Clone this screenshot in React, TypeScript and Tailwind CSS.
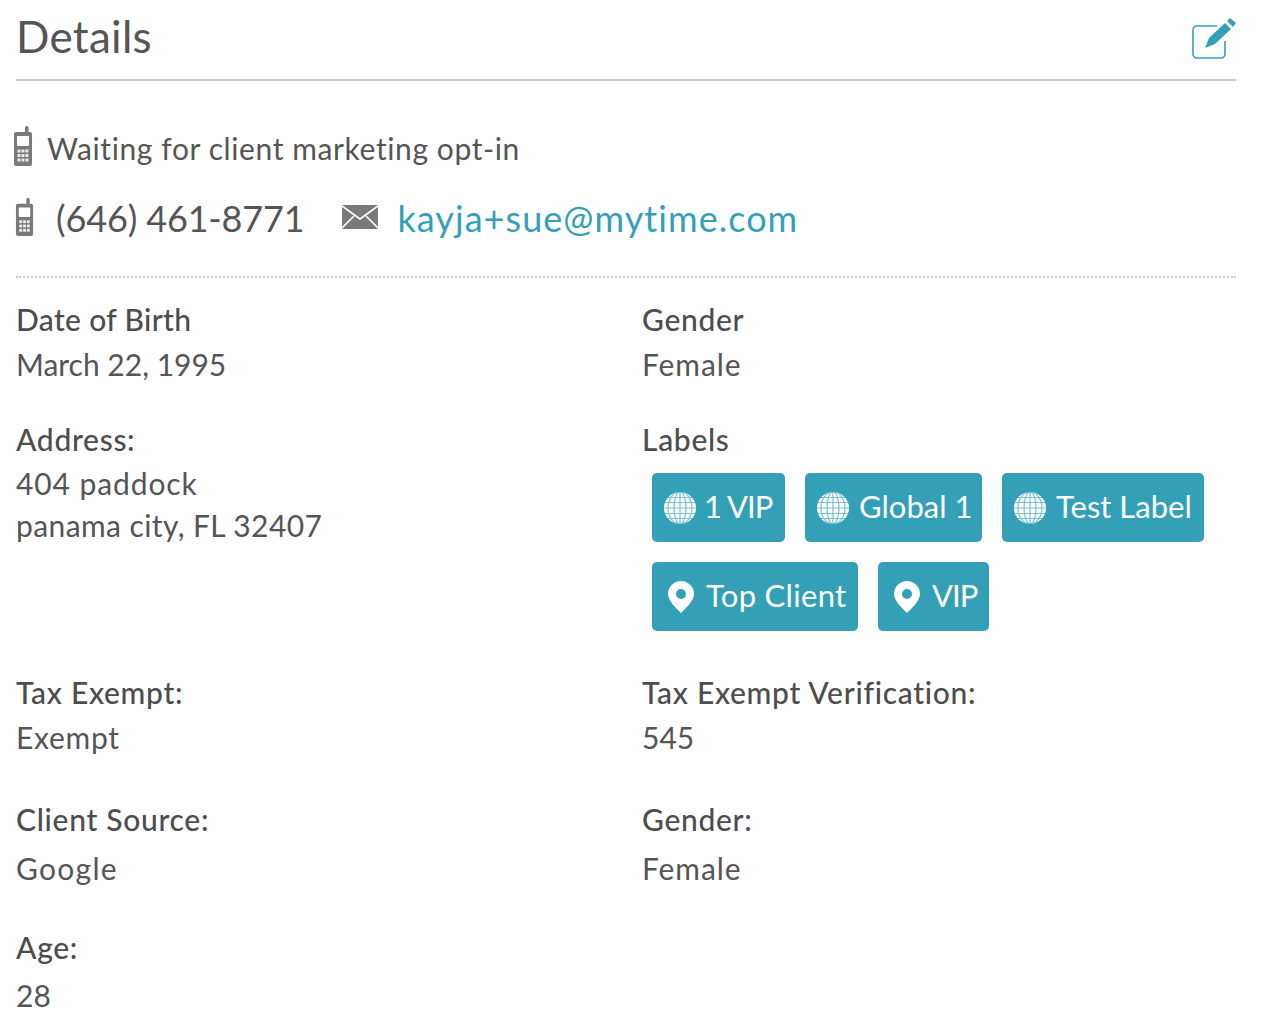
import React from "react";

const PhoneIcon = ({ className }: { className?: string }) => (
  <svg viewBox="0 0 20 40" className={className} fill="#7a7a7a">
    <rect x="12" y="0" width="3.5" height="8" rx="1.5" />
    <path d="M3 6h14a2 2 0 0 1 2 2v30a2 2 0 0 1-2 2H3a2 2 0 0 1-2-2V8a2 2 0 0 1 2-2z" />
    <rect x="4" y="10" width="12" height="10" rx="1" fill="#fff" />
    {[23.5, 28, 32.5].map((y) =>
      [4.5, 8.5, 12.5].map((x) => <rect key={`${x}-${y}`} x={x} y={y} width="3" height="3" fill="#fff" opacity="0.85" />)
    )}
  </svg>
);

const MailIcon = () => (
  <svg viewBox="0 0 36 24" className="h-[24px] w-[36px] shrink-0">
    <rect width="36" height="24" fill="#7a7a7a" />
    <path d="M0 1l18 13L36 1M0 23l12-12M36 23L24 11" fill="none" stroke="#fff" strokeWidth="1.6" />
  </svg>
);

const EditIcon = () => (
  <svg viewBox="0 0 46 42" className="h-[42px] w-[46px]">
    <path d="M27 9H7a4 4 0 0 0-4 4v24a4 4 0 0 0 4 4h24a4 4 0 0 0 4-4V24" fill="none" stroke="#33a0b8" strokeWidth="1.6" />
    <path d="M15 31l4-10L35 6l6 6-16 15z" fill="#33a0b8" />
    <path d="M37 4l3-3 6 5-3 4z" fill="#33a0b8" />
  </svg>
);

const GlobeIcon = () => (
  <svg viewBox="0 0 34 32" className="h-[32px] w-[34px] shrink-0">
    <circle cx="17" cy="16" r="16" fill="#fff" />
    <g stroke="#33a0b8" strokeWidth="1.2" fill="none" opacity="0.65">
      <ellipse cx="17" cy="16" rx="6" ry="16" />
      <ellipse cx="17" cy="16" rx="12" ry="16" />
      <path d="M17 0v32M2 5.500h30M1 10.500h32M1 16h32M1 21.500h32M2 26.500h30" />
    </g>
  </svg>
);

const PinIcon = () => (
  <svg viewBox="0 0 26 32" className="h-[32px] w-[26px] shrink-0">
    <path fillRule="evenodd" d="M13 0a13 13 0 0 1 13 13C26 20 17 28 13 32 9 28 0 20 0 13A13 13 0 0 1 13 0zm0 8a5 5 0 1 0 0 10 5 5 0 0 0 0-10z" fill="#fff" />
  </svg>
);

function Tag({ icon, text, className }: { icon: React.ReactNode; text: string; className: string }) {
  return (
    <span className={`flex h-[69px] items-center rounded-[5px] bg-[#33a0b8] text-[31px] text-white ${className}`}>
      {icon}
      <span className="-mt-[3px]">{text}</span>
    </span>
  );
}

function Field({
  label,
  children,
  className,
  labelClass = "tracking-[0.7px]",
  valueClass = "mt-[4px] tracking-[0.7px]",
}: {
  label: string;
  children: React.ReactNode;
  className?: string;
  labelClass?: string;
  valueClass?: string;
}) {
  return (
    <div className={className}>
      <div className={`text-[30px] leading-[40px] font-medium text-[#4d4d4d] ${labelClass}`}>{label}</div>
      <div className={`text-[30px] leading-[42px] text-[#555] ${valueClass}`}>{children}</div>
    </div>
  );
}

export default function App() {
  return (
    <div className="w-[1268px] h-[1030px] overflow-hidden bg-white font-['Lato','Open_Sans',sans-serif] text-[#555] [font-variant-ligatures:none]">
      <div className="ml-4 w-[1220px]">
        <div className="flex h-[81px] items-start justify-between border-b-2 border-[#ccc]">
          <h2 className="mt-[10px] text-[44px] leading-[52px] tracking-[0.3px] text-[#555]">Details</h2>
          <div className="mt-[17px]">
            <EditIcon />
          </div>
        </div>

        <div className="mt-[45px] flex h-[40px] items-center">
          <PhoneIcon className="-ml-[3px] h-[40px] w-[20px] shrink-0" />
          <span className="mt-[4px] ml-[14px] text-[30px] leading-[40px] tracking-[0.6px]">
            Waiting for client marketing opt-in
          </span>
        </div>

        <div className="mt-[31px] flex h-[40px] items-center">
          <PhoneIcon className="-ml-px h-[40px] w-[19px] shrink-0" />
          <span className="mt-[2px] ml-[22px] text-[36px] leading-[44px] tracking-[-0.15px]">(646) 461-8771</span>
          <span className="ml-[37px]">
            <MailIcon />
          </span>
          <span className="mt-[2px] ml-[20px] text-[36px] leading-[44px] tracking-[1.05px] text-[#33a0b8]">
            kayja+sue@mytime.com
          </span>
        </div>

        <div className="mt-[39px] border-t-2 border-dotted border-[#ccc]" />

        <div className="mt-[21px] grid grid-cols-[626px_1fr]">
          <Field label="Date of Birth" labelClass="tracking-[0.35px]" valueClass="mt-[4px]">March 22, 1995</Field>
          <Field label="Gender" valueClass="mt-[4px] tracking-[0.9px]">Female</Field>

          <Field label="Address:" className="mt-[34px]" valueClass="mt-[3px] tracking-[0.4px]">
            <span className="tracking-[0.9px]">404 paddock</span>
            <br />
            panama city, FL 32407
          </Field>
          <div className="mt-[34px]">
            <div className="text-[30px] leading-[40px] font-medium tracking-[0.7px] text-[#4d4d4d]">Labels</div>
            <div className="mt-[14px] ml-[10px] flex flex-wrap gap-x-5 gap-y-5">
              <Tag icon={<GlobeIcon />} text="1 VIP" className="w-[133px] gap-[7px] pl-[11px] tracking-[-0.9px]" />
              <Tag icon={<GlobeIcon />} text="Global 1" className="w-[177px] gap-[9px] pl-[11px]" />
              <Tag icon={<GlobeIcon />} text="Test Label" className="w-[202px] gap-[9px] pl-[11px]" />
              <Tag icon={<PinIcon />} text="Top Client" className="w-[206px] gap-[12px] pl-[16px] tracking-[0.3px]" />
              <Tag icon={<PinIcon />} text="VIP" className="w-[111px] gap-[12px] pl-[16px] tracking-[-1px]" />
            </div>
          </div>

          <Field label="Tax Exempt:" className="mt-[41px]">Exempt</Field>
          <Field label="Tax Exempt Verification:" className="mt-[41px]" valueClass="mt-[4px]">545</Field>

          <Field label="Client Source:" className="mt-[41px]" valueClass="mt-[8px] tracking-[1.3px]">Google</Field>
          <Field label="Gender:" className="mt-[41px]" valueClass="mt-[8px] tracking-[0.9px]">Female</Field>

          <Field label="Age:" className="mt-[38px]" valueClass="mt-[7px]">28</Field>
        </div>
      </div>
    </div>
  );
}
